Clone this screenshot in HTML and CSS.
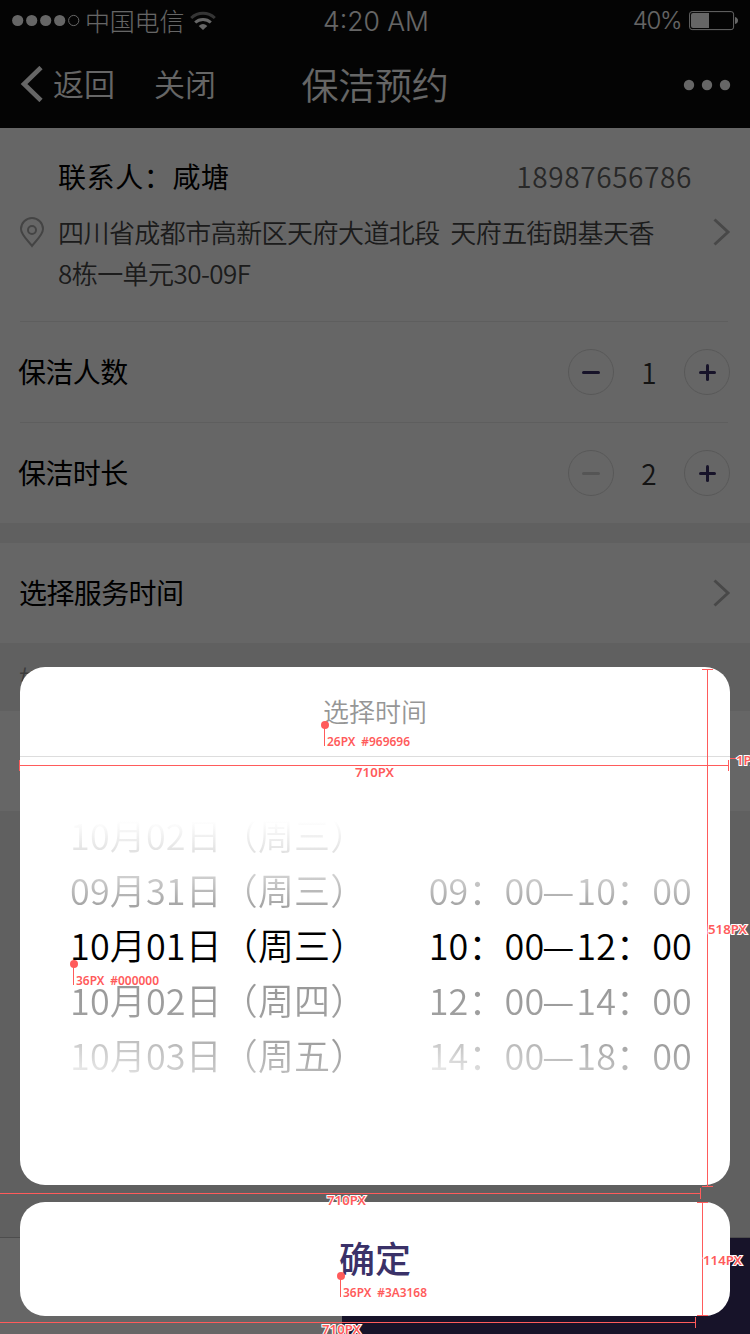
FILE: index.html
```html
<!DOCTYPE html>
<html lang="zh-CN">
<head>
<meta charset="utf-8">
<title>保洁预约</title>
<link rel="stylesheet" href="styles.css">
</head>
<body>
<div class="screen">
  <header class="header">
    <div class="status">
      <div class="carrier">
        <svg width="68" height="14" viewBox="0 0 68 14"><g fill="#fff"><circle cx="5.700" cy="6.500" r="5.600"/><circle cx="19.700" cy="6.500" r="5.600"/><circle cx="33.700" cy="6.500" r="5.600"/><circle cx="47.700" cy="6.500" r="5.600"/></g><circle cx="61.700" cy="6.500" r="5.100" fill="none" stroke="#fff"/></svg>
        <span class="carrier-name">中国电信</span>
        <svg class="wifi" width="26" height="20" viewBox="0 0 26 20" fill="none" stroke="#fff" stroke-width="3"><path d="M1.200 7C8 .8 18 .8 24.800 7" stroke-opacity=".5"/><path d="M5.200 11.500C9.500 7.500 16.500 7.500 20.800 11.500"/><path d="M8.700 15Q13 11 17.300 15L13 19Z" fill="#fff" stroke="none"/></svg>
      </div>
      <div class="clock">4:20 AM</div>
      <div class="power"><span>40%</span>
        <svg width="49" height="20" viewBox="0 0 49 20"><rect x=".6" y=".6" width="44" height="18" rx="2.500" fill="none" stroke="#fff"/><path d="M4 2H20V17H4Q2 17 2 15V4Q2 2 4 2Z" fill="#fff"/><path d="M46 6Q49 7 49 9.500T46 13Z" fill="#fff"/></svg>
      </div>
    </div>
    <nav class="nav">
      <div class="nav-left">
        <svg width="24" height="36" viewBox="0 0 24 36" fill="none" stroke="#fff" stroke-width="4.600"><path d="M22 1.500 5 18 22 34.500"/></svg>
        <span class="back">返回</span><span class="close">关闭</span>
      </div>
      <h1 class="title">保洁预约</h1>
      <svg class="more" width="48" height="12" viewBox="0 0 48 12" fill="#fff"><circle cx="6" cy="6" r="5.200"/><circle cx="24" cy="6" r="5.200"/><circle cx="42" cy="6" r="5.200"/></svg>
    </nav>
  </header>

  <main class="content">
    <section class="contact">
      <div class="contact-head"><span class="contact-name">联系人：咸塘</span><span class="phone">18987656786</span></div>
      <div class="contact-body">
        <svg class="pin" width="24" height="31" viewBox="0 0 24 31" fill="none" stroke="#aaa" stroke-width="2"><path d="M12 29C9 24.500 1 18 1 12A11 11 0 0 1 23 12C23 18 15 24.500 12 29Z"/><circle cx="12" cy="13" r="4"/></svg>
        <p class="address">四川省成都市高新区天府大道北段&nbsp; 天府五街朗基天香<br>8栋一单元30-09F</p>
        <svg class="chevron" width="18" height="28" viewBox="0 0 18 28"><path d="M1.500 1.500 15 14 1.500 26.500"/></svg>
      </div>
    </section>
    <section class="row">
      <span class="label">保洁人数</span>
      <div class="stepper"><span class="step"><i class="bar"></i></span><span class="count">1</span><span class="step"><i class="bar plus"></i></span></div>
    </section>
    <section class="row">
      <span class="label">保洁时长</span>
      <div class="stepper"><span class="step"><i class="bar off"></i></span><span class="count">2</span><span class="step"><i class="bar plus"></i></span></div>
    </section>
    <section class="service">
      <span class="label">选择服务时间</span>
      <svg class="chevron" width="18" height="28" viewBox="0 0 18 28"><path d="M1.500 1.500 15 14 1.500 26.500"/></svg>
    </section>
    <div class="note">如</div>
    <div class="blank"></div>
  </main>
  <footer class="footer"><div class="footer-left"></div><div class="footer-right"></div></footer>

  <div class="overlay">
    <div class="picker">
      <div class="picker-title">选择时间</div>
      <div class="wheels">
        <div class="wheel">
          <div class="item far-up">10月02日（周三）</div>
          <div class="item up">09月31日（周三）</div>
          <div class="item current">10月01日（周三）</div>
          <div class="item down">10月02日（周四）</div>
          <div class="item far-down">10月03日（周五）</div>
        </div>
        <div class="wheel times">
          <div class="item up">09：00<span class="dash">—</span>10：00</div>
          <div class="item current">10：00<span class="dash">—</span>12：00</div>
          <div class="item down">12：00<span class="dash">—</span>14：00</div>
          <div class="item far-down">14：00<span class="dash">—</span>18：00</div>
        </div>
      </div>
    </div>
    <div class="confirm">确定</div>
  </div>

  <svg class="marks" width="750" height="1334" viewBox="0 0 750 1334">
    <g class="mark-lines">
      <path d="M324.500 725V746M73.500 964V985M340.500 1276V1297"/>
      <path d="M20 765.500H728M19.500 760V771M728.500 760V771M730 758.500H740"/>
      <path d="M707.500 669V1186M702 669.500H713M702 1186.500H713"/>
      <path d="M0 1193.500H700M700.500 1188V1199"/>
      <path d="M702.500 1202V1315M697 1202.500H708M697 1315.500H708"/>
      <path d="M0 1322.500H695M695.500 1317V1328"/>
    </g>
    <g fill="#ff5b5b"><circle cx="325" cy="725" r="4"/><circle cx="74" cy="964" r="4"/><circle cx="341" cy="1276" r="4"/></g>
    <g class="mark-text">
      <text x="327" y="746" textLength="83" lengthAdjust="spacingAndGlyphs">26PX #969696</text>
      <text x="355" y="777" textLength="39" lengthAdjust="spacingAndGlyphs">710PX</text>
      <text x="736" y="765" textLength="24" lengthAdjust="spacingAndGlyphs">1PX</text>
      <text x="76" y="985" textLength="83" lengthAdjust="spacingAndGlyphs">36PX #000000</text>
      <text x="708" y="934" textLength="39" lengthAdjust="spacingAndGlyphs">518PX</text>
      <text x="327" y="1205" textLength="39" lengthAdjust="spacingAndGlyphs">710PX</text>
      <text x="703" y="1265" textLength="39" lengthAdjust="spacingAndGlyphs">114PX</text>
      <text x="343" y="1297" textLength="84" lengthAdjust="spacingAndGlyphs">36PX #3A3168</text>
      <text x="322" y="1334" textLength="39" lengthAdjust="spacingAndGlyphs">710PX</text>
    </g>
  </svg>
</div>
</body>
</html>
```
FILE: styles.css
```css
* { box-sizing: border-box; }
body { margin: 0; }
svg { display: block; flex: none; }

.screen {
  position: relative;
  display: flex;
  flex-direction: column;
  width: 750px;
  height: 1334px;
  overflow: hidden;
  background: #f0f0f0;
  color: #000;
  font-family: "Noto Sans CJK SC", sans-serif;
}

/* Header */
.header { height: 128px; background: #0c0c0c; color: #fff; }
.status {
  display: grid;
  grid-template-columns: 1fr auto 1fr;
  align-items: center;
  height: 40px;
  padding: 0 12px;
}
.carrier { display: flex; align-items: center; font-size: 25px; font-weight: 300; line-height: 38px; }
.carrier-name { margin: -2px 6px 0 5px; letter-spacing: -.2px; }
.clock { padding-left: 2px; font: 300 26.5px/42px "Inter", sans-serif; }
.power {
  display: flex;
  align-items: center;
  justify-content: flex-end;
  gap: 8px;
  font: 300 24px/42px "Inter", sans-serif;
  letter-spacing: -1.4px;
}
.nav {
  display: grid;
  grid-template-columns: 1fr auto 1fr;
  align-items: center;
  height: 88px;
  padding: 0 19px;
}
.nav-left { display: flex; align-items: center; font-size: 31px; font-weight: 350; line-height: 84px; }
.back, .close { margin-top: -2px; }
.back { margin-right: 39px; margin-left: 10px; }
.title { margin: 0; font-size: 37px; font-weight: 350; line-height: 84px; letter-spacing: -.3px; }
.more { justify-self: end; margin: 2px 0 0; }

/* Form */
.content { display: flex; flex-direction: column; }
.contact {
  height: 193px;
  padding: 28px 20px 0;
  background: #fff;
}
.contact-head {
  display: flex;
  justify-content: space-between;
  padding: 0 38px;
  font-size: 28px;
  line-height: 41px;
}
.contact-name { font-weight: 400; letter-spacing: .6px; }
.phone { color: #646464; font-weight: 350; letter-spacing: .6px; }
.contact-body { display: flex; padding-top: 14px; }
.pin { margin-top: 6px; }
.address {
  flex: 1;
  margin: 0 0 0 14px;
  color: #464646;
  font-size: 26px;
  font-weight: 350;
  line-height: 41px;
  letter-spacing: -.55px;
}
.chevron { margin: 7px -1px 0 0; fill: none; stroke: #b4b4b4; stroke-width: 3; }
.row {
  display: flex;
  align-items: center;
  justify-content: space-between;
  height: 101px;
  padding: 0 20px;
  background: linear-gradient(#ebebeb, #ebebeb) 20px 0 / 708px 1px no-repeat #fff;
}
.label { margin: -2px 0 0 -2px; font-size: 28px; line-height: 40px; letter-spacing: -.6px; }
.stepper { display: flex; align-items: center; }
.step {
  display: grid;
  place-items: center;
  width: 46px;
  height: 46px;
  border: 1px solid #dcdcdc;
  border-radius: 50%;
}
.bar {
  display: grid;
  place-content: center;
  width: 18px;
  height: 3px;
  margin-top: 1px;
  border-radius: 1.5px;
  background: #3a3168;
}
.bar.off { background: #d4d4d4; }
.plus { width: 17px; }
.plus::before { content: ""; width: 3px; height: 17px; border-radius: 1.5px; background: #3a3168; }
.count { width: 70px; font-size: 28px; font-weight: 350; line-height: 40px; text-align: center; color: #333; }
.service {
  display: flex;
  justify-content: space-between;
  align-items: center;
  height: 100px;
  margin-top: 20px;
  padding: 0 20px;
  background: #fff;
}
.service .label { margin-left: -1px; }
.service .chevron { margin-top: 0; }
.note { height: 68px; padding-left: 19px; font-size: 24px; font-weight: 350; line-height: 70px; color: #969696; }
.blank { height: 100px; background: #fff; }
.footer { display: flex; height: 97px; margin-top: auto; border-top: 1px solid #c0c0c0; }
.footer-left { width: 342px; background: #fff; }
.footer-right { flex: 1; background: #3a3168; }

/* Time picker sheet */
.overlay {
  position: absolute;
  inset: 0;
  display: flex;
  flex-direction: column;
  justify-content: flex-end;
  gap: 17px;
  padding: 0 20px 18px;
  background: rgba(0, 0, 0, .6);
}
.picker { height: 518px; border-radius: 25px; background: #fff; }
.picker-title {
  height: 90px;
  border-bottom: 1px solid #ddd;
  color: #969696;
  font-size: 26px;
  font-weight: 350;
  line-height: 88px;
  text-align: center;
}
.wheels { display: flex; justify-content: space-between; padding: 50px 38px 0 50px; }
.times { padding-top: 55px; }
.item {
  height: 55px;
  font-size: 36px;
  line-height: 55px;
  white-space: nowrap;
  font-weight: 350;
  letter-spacing: .12px;
  color: transparent;
  background-clip: text;
  -webkit-background-clip: text;
}
.far-up { background-image: linear-gradient(#fff 25%, #e0e0e0 85%); }
.up { background-image: linear-gradient(#d4d4d4 20%, #a4a4a4 80%); }
.current { color: #000; }
.down { background-image: linear-gradient(#969696, #a2a2a2); }
.far-down { background-image: linear-gradient(14deg, #f8f8f8, #ccc 32%, #999 85%); }
.dash { display: inline-block; width: 32px; text-indent: -2px; }
.confirm {
  height: 114px;
  border-radius: 25px;
  background: #fff;
  color: #3a3168;
  font-size: 36px;
  font-weight: 500;
  line-height: 110px;
  text-align: center;
}

/* Dimension marks */
.marks { position: absolute; inset: 0; }
.mark-lines { fill: none; stroke: #ff5b5b; stroke-width: 1; }
.mark-text {
  fill: #ff5b5b;
  stroke: #fff;
  stroke-width: 2px;
  paint-order: stroke;
  font: 600 13px "Noto Sans", sans-serif;
  word-spacing: 3px;
}
```
